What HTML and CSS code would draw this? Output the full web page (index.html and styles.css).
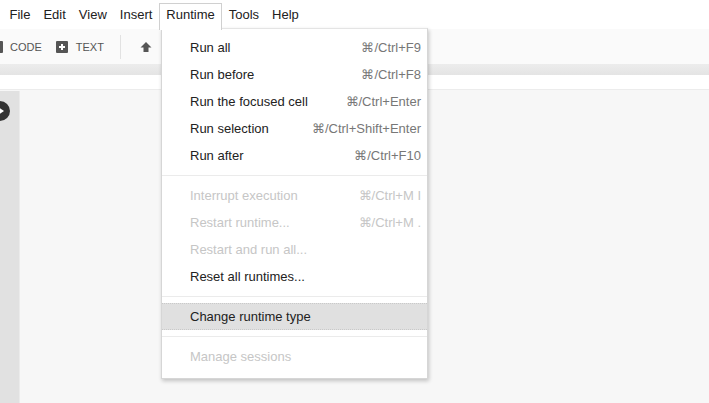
FILE: index.html
```html
<!DOCTYPE html>
<html>
<head>
<meta charset="utf-8">
<link rel="stylesheet" href="styles.css">
</head>
<body>
<div class="app">
  <div class="menubar">
    <span class="mitem">File</span>
    <span class="mitem">Edit</span>
    <span class="mitem">View</span>
    <span class="mitem">Insert</span>
    <span class="mitem active">Runtime</span>
    <span class="mitem">Tools</span>
    <span class="mitem">Help</span>
  </div>
  <div class="toolbar">
    <span class="tbtn"><span class="plus-box cut"></span>CODE</span>
    <span class="tbtn"><span class="plus-box"></span>TEXT</span>
    <span class="tsep"></span>
    <span class="tbtn"><svg class="arrow" viewBox="0 0 12 12" width="12" height="12"><path d="M6 1 L11.5 6.5 H8.5 V11 H3.5 V6.5 H0.5 Z" fill="#555"/></svg><span class="ring"></span></span>
  </div>
  <div class="band-gray"></div>
  <div class="band-white"></div>
  <div class="main">
    <div class="gutter"><span class="play"></span></div>
    <div class="content"></div>
  </div>

  <div class="menu">
    <div class="row"><span>Run all</span><span class="kbd">⌘/Ctrl+F9</span></div>
    <div class="row"><span>Run before</span><span class="kbd">⌘/Ctrl+F8</span></div>
    <div class="row"><span>Run the focused cell</span><span class="kbd">⌘/Ctrl+Enter</span></div>
    <div class="row"><span>Run selection</span><span class="kbd">⌘/Ctrl+Shift+Enter</span></div>
    <div class="row"><span>Run after</span><span class="kbd">⌘/Ctrl+F10</span></div>
    <div class="sep"></div>
    <div class="row disabled"><span>Interrupt execution</span><span class="kbd">⌘/Ctrl+M I</span></div>
    <div class="row disabled"><span>Restart runtime...</span><span class="kbd">⌘/Ctrl+M .</span></div>
    <div class="row disabled"><span>Restart and run all...</span></div>
    <div class="row"><span>Reset all runtimes...</span></div>
    <div class="sep"></div>
    <div class="row hl"><span>Change runtime type</span></div>
    <div class="sep"></div>
    <div class="row disabled"><span>Manage sessions</span></div>
  </div>
</div>
</body>
</html>
```

FILE: styles.css
```css
* { box-sizing: border-box; }
html, body { margin: 0; padding: 0; }
body {
  width: 709px;
  height: 403px;
  overflow: hidden;
  font-family: "Liberation Sans", Arial, sans-serif;
  color: #212121;
  background: #f7f7f7;
}
.app {
  position: relative;
  width: 709px;
  height: 403px;
  display: flex;
  flex-direction: column;
}
.menubar {
  height: 29px;
  flex: none;
  display: flex;
  align-items: flex-end;
  padding-left: 3px;
  background: #fff;
  font-size: 13px;
}
.mitem {
  height: 26px;
  line-height: 22px;
  padding: 1px 6.5px 0;
  color: #212121;
}
.mitem.active {
  position: relative;
  z-index: 3;
  background: #fff;
  border: 1px solid #d0d0d0;
  border-bottom: none;
  padding: 0 6.5px;
  height: 27px;
  margin-bottom: -1px;
}
.toolbar {
  height: 35px;
  flex: none;
  display: flex;
  align-items: center;
  background: #fafafa;
  font-size: 11px;
  color: #555;
  white-space: nowrap;
}
.tbtn {
  display: flex;
  align-items: center;
  gap: 8px;
  margin-right: 14px;
  flex: none;
}
.plus-box {
  width: 12px;
  height: 12px;
  background: #555;
  border-radius: 1px;
  position: relative;
  flex: none;
}
.plus-box::before, .plus-box::after {
  content: "";
  position: absolute;
  background: #fff;
}
.plus-box::before { left: 3px; top: 5px; width: 6px; height: 2px; }
.plus-box::after { left: 5px; top: 3px; width: 2px; height: 6px; }
.plus-box.cut { margin-left: -9px; margin-right: -1px; }
.tsep {
  width: 1px;
  height: 24px;
  background: #e2e2e2;
  margin: 0 19px 0 2px;
  flex: none;
}
.arrow { display: block; flex: none; }
.ring {
  width: 9px;
  height: 9px;
  border: 1.5px solid #666;
  border-radius: 50%;
  margin-left: 1px;
}
.band-gray {
  height: 11px;
  flex: none;
  background: linear-gradient(#ececec, #e4e4e4);
}
.band-white {
  height: 15px;
  flex: none;
  background: #fff;
  border-bottom: 1px solid #ececec;
}
.main {
  flex: 1;
  display: flex;
  padding-top: 1px;
  background: #f7f7f7;
}
.gutter {
  width: 20px;
  flex: none;
  background: #e1e1e1;
  border-right: 1px solid #ebebeb;
  padding-top: 10px;
}
.play {
  display: block;
  position: relative;
  width: 20px;
  height: 20px;
  margin-left: -10px;
  border-radius: 50%;
  background: #333;
}
.play::after {
  content: "";
  position: absolute;
  left: 8px;
  top: 6px;
  border-left: 6px solid #fff;
  border-top: 4px solid transparent;
  border-bottom: 4px solid transparent;
}
.content { flex: 1; }
.menu {
  position: absolute;
  left: 161px;
  top: 28px;
  width: 267px;
  padding: 5px 0 8px;
  background: #fff;
  border: 1px solid #d6d6d6;
  border-top-color: #e4e4e4;
  box-shadow: 1px 2px 4px rgba(0,0,0,0.22);
  font-size: 13px;
  z-index: 2;
}
.row {
  height: 27px;
  display: flex;
  align-items: center;
  justify-content: space-between;
  padding: 0 6px 0 28px;
  color: #222;
  white-space: nowrap;
}
.kbd { color: #777; }
.row.disabled, .row.disabled .kbd { color: #c6c6c6; }
.row.hl {
  background: #e0e0e0;
  border-top: 1px dotted #c9c9c9;
  border-bottom: 1px dotted #c9c9c9;
}
.sep {
  height: 1px;
  background: #ebebeb;
  margin: 6px 0;
}
```
